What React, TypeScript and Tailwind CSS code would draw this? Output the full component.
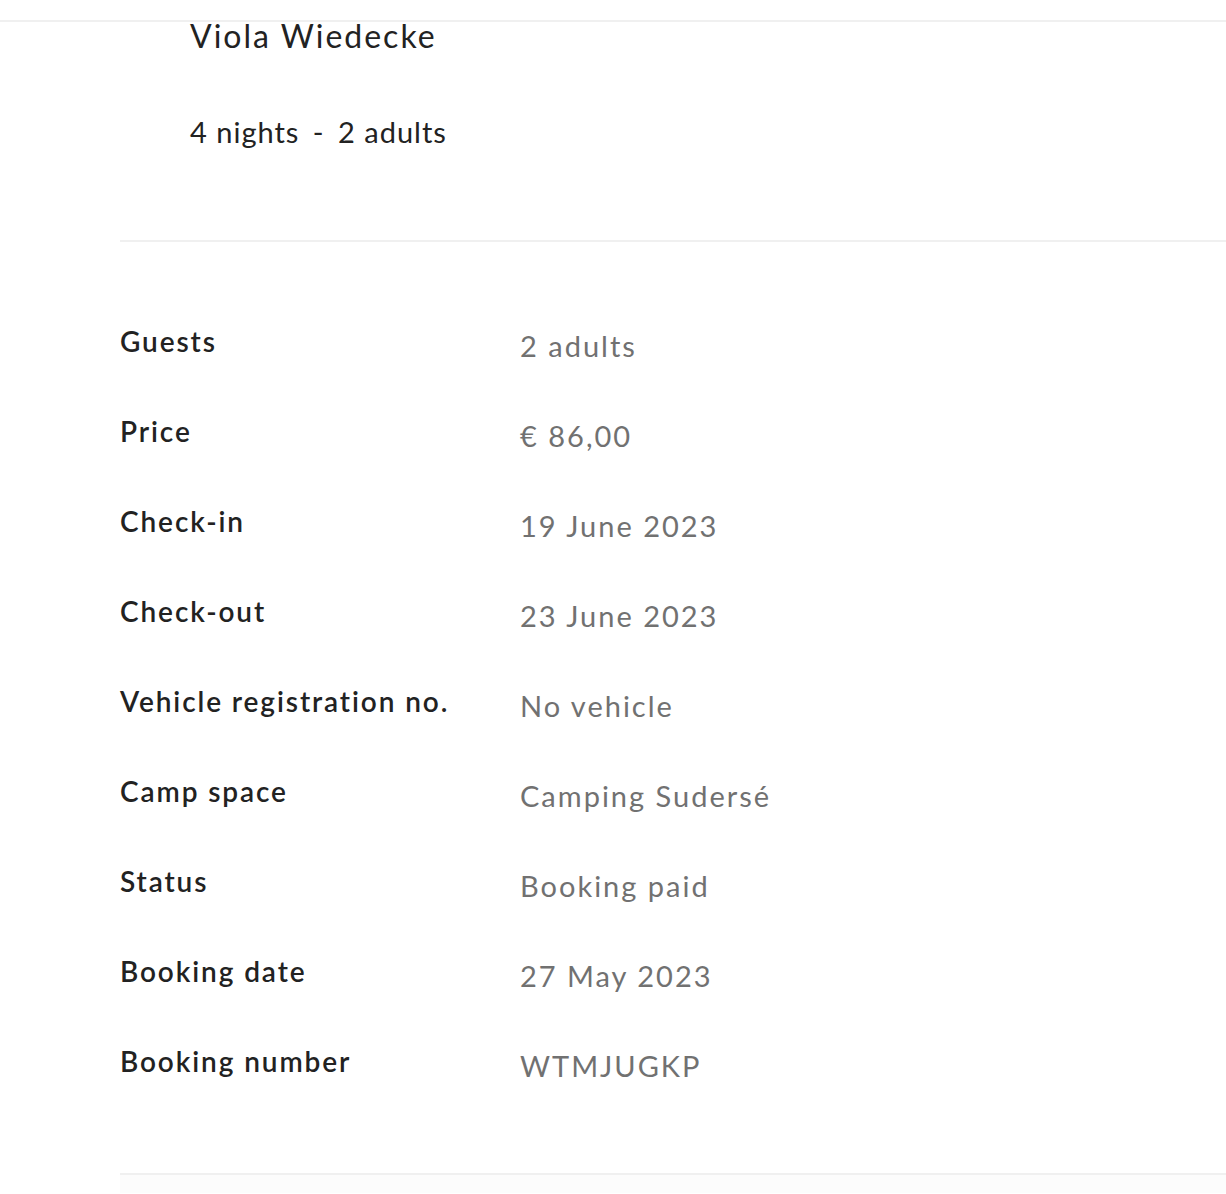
const details = [
  { label: "Guests", value: "2 adults" },
  { label: "Price", value: "€ 86,00" },
  { label: "Check-in", value: "19 June 2023" },
  { label: "Check-out", value: "23 June 2023" },
  { label: "Vehicle registration no.", value: "No vehicle" },
  { label: "Camp space", value: "Camping Sudersé" },
  { label: "Status", value: "Booking paid" },
  { label: "Booking date", value: "27 May 2023" },
  { label: "Booking number", value: "WTMJUGKP" },
];

const App = () => {
  return (
    <div className="min-h-[1194px] bg-white font-['Lato',sans-serif]">
      <div className="h-5" />
      <div className="border-t-2 border-[#f0f0f0]">
        <div className="pl-[190px]">
          <h1 className="text-[32px] leading-[28px] tracking-[2px] text-[#222222]">Viola Wiedecke</h1>
          <p className="mt-[66px] text-[29px] leading-[32px] tracking-[1px] text-[#222222]">
            4 nights <span className="mx-[5px]">-</span> 2 adults
          </p>
        </div>
        <div className="ml-[120px] mt-[92px] border-t-2 border-[#f0f0f0] pt-[82px] pb-[39px]">
          {details.map((row) => (
            <div key={row.label} className="flex h-[90px]">
              <div className="w-[400px] text-[28px] font-semibold leading-[34px] tracking-[1.9px] text-[#222222]">
                {row.label}
              </div>
              <div className="pt-[5px] text-[29px] leading-[34px] tracking-[2px] text-[#717171]">{row.value}</div>
            </div>
          ))}
        </div>
        <div className="ml-[120px] border-t-2 border-[#f0f0f0] h-[20px] bg-[#fcfcfc]" />
      </div>
    </div>
  );
};

export default App;
